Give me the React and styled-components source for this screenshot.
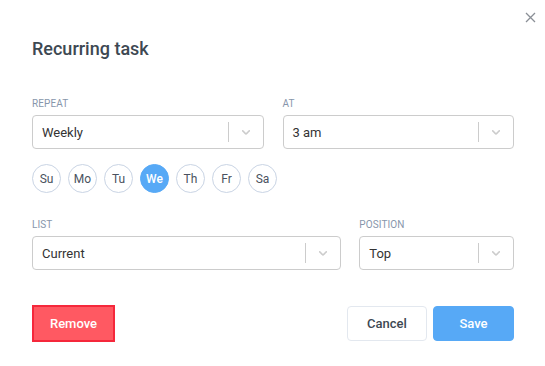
import React from "react";
import styled, { createGlobalStyle } from "styled-components";

const Global = createGlobalStyle`
  html, body { margin: 0; padding: 0; background: #fff; }
  body { font-family: Roboto, "Liberation Sans", Arial, sans-serif; }
  * { box-sizing: border-box; }
`;

const Dialog = styled.div`
  position: relative;
  width: 545px;
  height: 366px;
  padding: 37px 31px 0 32px;
`;

const Close = styled.button`
  position: absolute;
  top: 10px;
  right: 8px;
  width: 14px;
  height: 14px;
  padding: 0;
  border: 0;
  background: none;
  display: flex;
  align-items: center;
  justify-content: center;
  color: #8a8f96;
`;

const Title = styled.h2`
  margin: 0;
  font-size: 18px;
  line-height: 24px;
  font-weight: 500;
  color: #3d4852;
`;

const Row = styled.div`
  display: grid;
  grid-template-columns: ${(p) => p.$cols};
  column-gap: ${(p) => p.$gap}px;
  margin-top: ${(p) => p.$top}px;
`;

const Field = styled.div`
  display: flex;
  flex-direction: column;
`;

const Label = styled.div`
  font-size: 10px;
  line-height: 12px;
  height: 12px;
  text-transform: uppercase;
  color: #8796ab;
  margin-bottom: 5px;
  letter-spacing: 0.1px;
`;

const SelectBox = styled.div`
  height: 34px;
  border: 1px solid #cccccc;
  border-radius: 4px;
  display: flex;
  align-items: center;
  background: #fff;
`;

const Value = styled.div`
  flex: 1;
  padding-left: 9px;
  font-size: 13px;
  color: #333;
`;

const Sep = styled.span`
  width: 1px;
  height: 20px;
  background: #cccccc;
`;

const Indicator = styled.span`
  width: 34px;
  display: flex;
  align-items: center;
  justify-content: center;
  color: #cccccc;
`;

const Days = styled.div`
  display: flex;
  gap: 7px;
  margin-top: 15px;
`;

const Day = styled.div`
  width: 29px;
  height: 29px;
  border-radius: 50%;
  border: 1px solid ${(p) => (p.$active ? "#57a9f6" : "#c9d4e4")};
  background: ${(p) => (p.$active ? "#57a9f6" : "#fff")};
  color: ${(p) => (p.$active ? "#fff" : "#4a5260")};
  font-size: 12px;
  font-weight: ${(p) => (p.$active ? 500 : 400)};
  display: flex;
  align-items: center;
  justify-content: center;
`;

const Footer = styled.div`
  display: flex;
  align-items: center;
  margin-top: 35px;
`;

const Actions = styled.div`
  margin-left: auto;
  display: flex;
  gap: 6px;
`;

const Button = styled.button`
  height: ${(p) => (p.$danger ? 37 : 35)}px;
  width: ${(p) => p.$w}px;
  font-family: inherit;
  font-size: 13px;
  font-weight: 500;
  padding: 0;
  border-radius: ${(p) => (p.$danger ? 0 : 4)}px;
  border: ${(p) =>
    p.$danger ? "2px solid #f5283b" : p.$primary ? "1px solid #57a9f6" : "1px solid #e3e8ef"};
  background: ${(p) => (p.$danger ? "#ff5962" : p.$primary ? "#57a9f6" : "#fff")};
  color: ${(p) => (p.$danger || p.$primary ? "#fff" : "#3d4852")};
`;

const Chevron = () => (
  <svg width="14" height="14" viewBox="0 0 20 20" fill="currentColor">
    <path d="M4.516 7.548c0.436-0.446 1.043-0.481 1.576 0l3.908 3.747 3.908-3.747c0.533-0.481 1.141-0.446 1.574 0 0.436 0.445 0.408 1.197 0 1.615-0.406 0.418-4.695 4.502-4.695 4.502-0.217 0.223-0.502 0.335-0.787 0.335s-0.57-0.112-0.789-0.335c0 0-4.287-4.084-4.695-4.502s-0.436-1.170 0-1.615z" />
  </svg>
);

const Select = ({ label, value }) => (
  <Field>
    <Label>{label}</Label>
    <SelectBox>
      <Value>{value}</Value>
      <Sep />
      <Indicator>
        <Chevron />
      </Indicator>
    </SelectBox>
  </Field>
);

const days = ["Su", "Mo", "Tu", "We", "Th", "Fr", "Sa"];

export default function App() {
  return (
    <>
      <Global />
      <Dialog>
        <Close aria-label="Close">
          <svg width="11" height="11" viewBox="0 0 11 11" stroke="currentColor" strokeWidth="1.3">
            <path d="M1 1L10 10M10 1L1 10" />
          </svg>
        </Close>
        <Title>Recurring task</Title>
        <Row $cols="1fr 1fr" $gap={19} $top={37}>
          <Select label="Repeat" value="Weekly" />
          <Select label="At" value="3 am" />
        </Row>
        <Days>
          {days.map((d) => (
            <Day key={d} $active={d === "We"}>
              {d}
            </Day>
          ))}
        </Days>
        <Row $cols="2fr 1fr" $gap={18} $top={26}>
          <Select label="List" value="Current" />
          <Select label="Position" value="Top" />
        </Row>
        <Footer>
          <Button $danger $w={83}>Remove</Button>
          <Actions>
            <Button $w={80}>Cancel</Button>
            <Button $primary $w={81}>Save</Button>
          </Actions>
        </Footer>
      </Dialog>
    </>
  );
}
